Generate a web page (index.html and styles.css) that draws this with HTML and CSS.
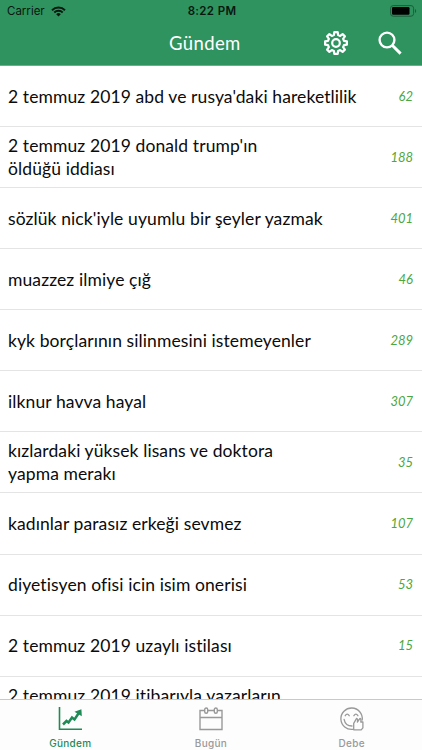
FILE: index.html
```
<!DOCTYPE html>
<html lang="tr">
<head>
  <meta charset="UTF-8">
  <meta name="viewport" content="width=device-width, initial-scale=1">
  <title>Gündem</title>
  <link rel="stylesheet" href="styles.css">
</head>
<body>
  <div class="app">
    <header>
      <div class="status">
        <div class="carrier">
          <span>Carrier</span>
          <svg width="15" height="11" viewBox="0 0 15 11">
            <path d="M1 4.2a9.3 9.3 0 0 1 13 0M3.3 6.5a6 6 0 0 1 8.4 0" fill="none" stroke="#07180f" stroke-width="1.9"/>
            <path d="M5.2 8.2a3.3 3.3 0 0 1 4.6 0L7.5 10.6z" fill="#07180f"/>
          </svg>
        </div>
        <div class="time">8:22 PM</div>
        <svg class="battery" width="27" height="12" viewBox="0 0 27 12">
          <rect x=".6" y=".6" width="23" height="10.6" rx="2.6" fill="none" stroke="#1d5c3b"/>
          <rect x="2" y="2" width="17.5" height="7.8" rx="1.2" fill="#000"/>
          <path d="M25 4v4c1.6-.6 1.6-3.4 0-4z" fill="#1d5c3b"/>
        </svg>
      </div>
      <div class="navbar">
        <h1>Gündem</h1>
        <div class="actions">
          <svg width="26" height="26" viewBox="-13 -13 26 26" fill="none" stroke="#fff" stroke-width="2.2" stroke-linejoin="round">
            <path d="M-2.1-8L-1.7-10.9H1.7L2.1-8L4.2-7.1L6.6-8.9L8.9-6.6L7.1-4.2L8-2.1L10.9-1.7V1.7L8 2.1L7.1 4.2L8.9 6.6L6.6 8.9L4.2 7.1L2.1 8L1.7 10.9H-1.7L-2.1 8L-4.2 7.1L-6.6 8.9L-8.9 6.6L-7.1 4.2L-8 2.1L-10.9 1.7V-1.7L-8-2.1L-7.1-4.2L-8.9-6.6L-6.6-8.9L-4.2-7.1z"/>
            <circle r="3.8"/>
          </svg>
          <svg width="24" height="24" viewBox="0 0 24 24" fill="none" stroke="#fff">
            <circle cx="9" cy="9" r="7.4" stroke-width="2.4"/>
            <path d="M14.2 14.2L22.6 22.6" stroke-width="3"/>
          </svg>
        </div>
      </div>
    </header>

    <ul class="topics">
      <li><span>2 temmuz 2019 abd ve rusya'daki hareketlilik</span><em>62</em></li>
      <li><span>2 temmuz 2019 donald trump'ın<br>öldüğü iddiası</span><em>188</em></li>
      <li><span>sözlük nick'iyle uyumlu bir şeyler yazmak</span><em>401</em></li>
      <li><span>muazzez ilmiye çığ</span><em>46</em></li>
      <li><span>kyk borçlarının silinmesini istemeyenler</span><em>289</em></li>
      <li><span>ilknur havva hayal</span><em>307</em></li>
      <li><span>kızlardaki yüksek lisans ve doktora<br>yapma merakı</span><em>35</em></li>
      <li><span>kadınlar parasız erkeği sevmez</span><em>107</em></li>
      <li><span>diyetisyen ofisi icin isim onerisi</span><em>53</em></li>
      <li><span>2 temmuz 2019 uzaylı istilası</span><em>15</em></li>
      <li><span>2 temmuz 2019 itibarıyla yazarların<br>&nbsp;</span></li>
    </ul>

    <nav class="tabs">
      <a class="active">
        <svg width="24" height="24" viewBox="0 0 24 24" fill="none" stroke="currentColor">
          <path d="M1.5 0V22.3H24" stroke-width="1.6"/>
          <path d="M5 17.5L8.5 14L10.5 15.5L14 10.5L16.5 12.5L21.5 5" stroke-width="2.5"/>
          <path d="M16.5 4.8L23.4 2.3L23.8 9.2z" fill="currentColor" stroke="none"/>
        </svg>
        <span>Gündem</span>
      </a>
      <a>
        <svg width="24" height="24" viewBox="0 0 24 24" fill="none" stroke="currentColor" stroke-width="1.4">
          <path d="M5.5 3.5H1V22.5H23V3.5H18.5M9 3.5H15M1 10.5H23"/>
          <rect x="5.7" y="1" width="3" height="5.2" rx="1.5"/>
          <rect x="15.3" y="1" width="3" height="5.2" rx="1.5"/>
        </svg>
        <span>Bugün</span>
      </a>
      <a>
        <svg width="24" height="24" viewBox="0 0 24 24" fill="none" stroke="currentColor" stroke-width="1.3" stroke-linecap="round" stroke-linejoin="round">
          <path d="M13 22.3A10.7 10.7 0 1 1 22.2 13"/>
          <path d="M5.2 8.7Q7.2 5.6 9.2 8.7M13.9 8.7Q15.9 5.6 17.9 8.7"/>
          <path d="M4.1 12.3Q5.4 19 12 19"/>
          <path d="M13.7 22.8V16.4L16.6 11.4Q18 11.6 17.4 15L20 11.4Q21.4 11.8 20.8 15H22.9V20.8L21.2 22.8z"/>
        </svg>
        <span>Debe</span>
      </a>
    </nav>
  </div>
</body>
</html>
```
FILE: styles.css
```
* {
  box-sizing: border-box;
}
body {
  margin: 0;
  font-family: Lato, "Noto Sans", sans-serif;
  background: #fff;
  color: #0b0b0b;
}
.app {
  display: flex;
  flex-direction: column;
  height: 750px;
  overflow: hidden;
}
header {
  flex: none;
  height: 66px;
  background: #2f935f;
  border-bottom: 1px solid #68af8a;
}
.status {
  display: grid;
  grid-template-columns: 1fr auto 1fr;
  align-items: center;
  height: 22px;
  padding: 0 5px 0 7px;
  font-family: Inter, sans-serif;
  font-size: 11.5px;
  color: #07180f;
}
.carrier {
  display: flex;
  align-items: center;
  gap: 6px;
}
.time {
  font-weight: 600;
  letter-spacing: 0.35px;
}
.battery {
  justify-self: end;
}
.navbar {
  display: flex;
  align-items: center;
  justify-content: space-between;
  height: 42px;
  padding: 0 20px 0 169px;
}
h1 {
  margin: 0;
  font-size: 18.5px;
  font-weight: 400;
  letter-spacing: 0.4px;
  color: #fff;
}
.actions {
  display: flex;
  align-items: center;
  gap: 29px;
}
.topics {
  flex: 1;
  min-height: 0;
  margin: 0;
  padding: 0;
  overflow: hidden;
  list-style: none;
}
.topics li {
  display: flex;
  align-items: center;
  justify-content: space-between;
  height: 61.07px;
  padding: 0 9px 0 8px;
  border-bottom: 1px solid #e4e4e4;
  font-size: 17.5px;
  line-height: 23px;
  letter-spacing: 0.1px;
  white-space: nowrap;
}
.topics em {
  font-size: 13px;
  letter-spacing: 0;
  color: #4aa83f;
}
.tabs {
  flex: none;
  display: grid;
  grid-template-columns: repeat(3, 1fr);
  height: 51px;
  background: #fdfdfd;
  border-top: 1px solid #c9c9c9;
}
.tabs a {
  display: flex;
  flex-direction: column;
  align-items: center;
  padding-top: 7px;
  color: #999;
}
.tabs a.active {
  color: #1f8a55;
}
.tabs span {
  margin-top: 5px;
  font-family: Inter, sans-serif;
  font-size: 10px;
  font-weight: 500;
  line-height: 14px;
  letter-spacing: 0.3px;
}
```
